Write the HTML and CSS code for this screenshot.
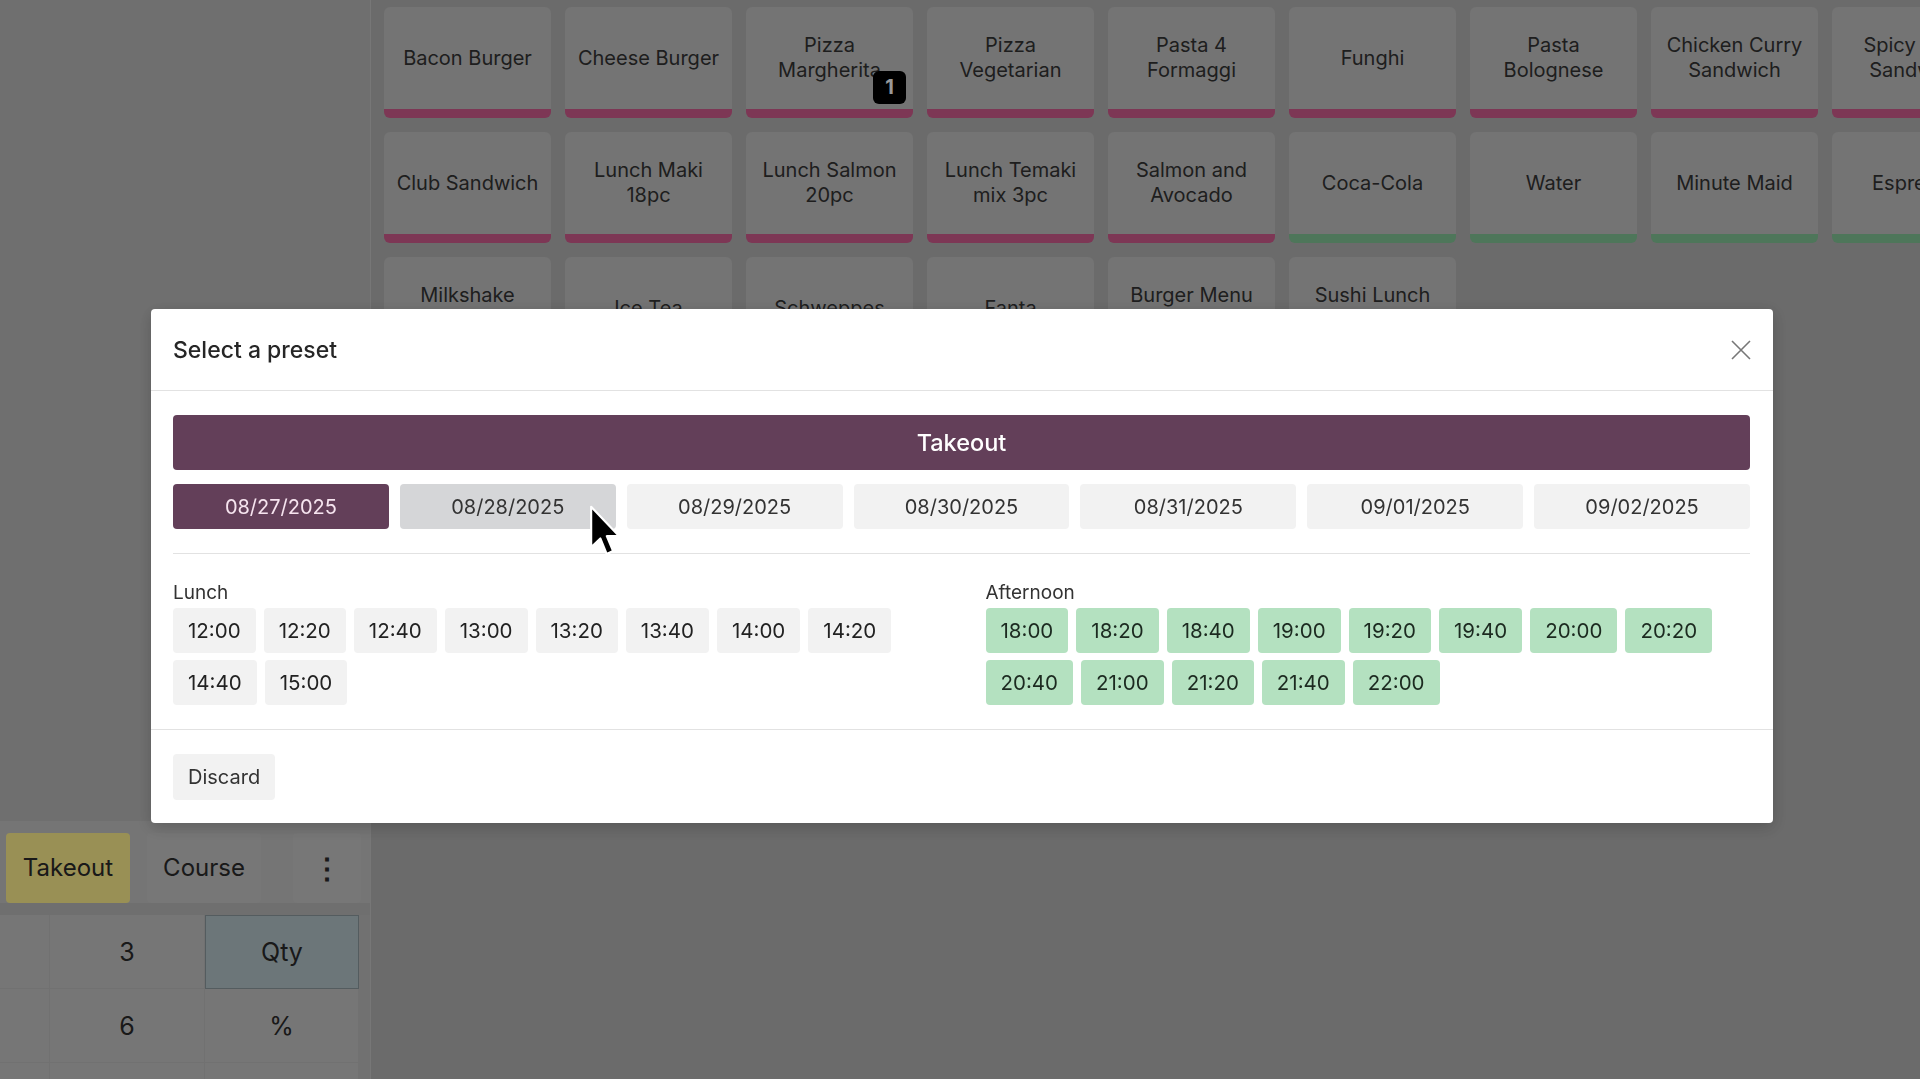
FILE: index.html
```html
<!DOCTYPE html>
<html lang="en">
<head>
    <meta charset="UTF-8">
    <meta name="viewport" content="width=device-width, initial-scale=1.0">
    <title>Point of Sale - Select a preset</title>
    <link rel="stylesheet" href="styles.css">
</head>
<body>
    <div class="pos">
        <aside class="left-panel">
            <div class="order-lines"></div>
            <div class="actions">
                <button class="action takeout">Takeout</button>
                <button class="action course">Course</button>
                <button class="action more">&#8942;</button>
            </div>
            <div class="numpad">
                <div class="key"></div>
                <div class="key">3</div>
                <div class="key mode">Qty</div>
                <div class="key"></div>
                <div class="key">6</div>
                <div class="key">%</div>
                <div class="key"></div>
                <div class="key"></div>
                <div class="key"></div>
            </div>
        </aside>

        <main class="products">
            <div class="product food"><span class="name">Bacon Burger</span></div>
            <div class="product food"><span class="name">Cheese Burger</span></div>
            <div class="product food"><span class="name">Pizza Margherita</span><span class="qty-badge">1</span></div>
            <div class="product food"><span class="name">Pizza Vegetarian</span></div>
            <div class="product food"><span class="name">Pasta 4 Formaggi</span></div>
            <div class="product food"><span class="name">Funghi</span></div>
            <div class="product food"><span class="name">Pasta Bolognese</span></div>
            <div class="product food"><span class="name">Chicken Curry Sandwich</span></div>
            <div class="product food"><span class="name">Spicy Tuna Sandwich</span></div>

            <div class="product food"><span class="name">Club Sandwich</span></div>
            <div class="product food"><span class="name">Lunch Maki 18pc</span></div>
            <div class="product food"><span class="name">Lunch Salmon 20pc</span></div>
            <div class="product food"><span class="name">Lunch Temaki mix 3pc</span></div>
            <div class="product food"><span class="name">Salmon and Avocado</span></div>
            <div class="product drink"><span class="name">Coca-Cola</span></div>
            <div class="product drink"><span class="name">Water</span></div>
            <div class="product drink"><span class="name">Minute Maid</span></div>
            <div class="product drink"><span class="name">Espresso</span></div>

            <div class="product drink"><span class="name">Milkshake Banana</span></div>
            <div class="product drink"><span class="name">Ice Tea</span></div>
            <div class="product drink"><span class="name">Schweppes</span></div>
            <div class="product drink"><span class="name">Fanta</span></div>
            <div class="product food"><span class="name">Burger Menu Combo</span></div>
            <div class="product food"><span class="name">Sushi Lunch Combo</span></div>
        </main>
    </div>

    <div class="backdrop">
        <div class="modal">
            <header class="modal-header">
                <h4 class="modal-title">Select a preset</h4>
                <button class="close" aria-label="Close">
                    <svg width="22" height="22" viewBox="0 0 22 22"><path d="M2 2 L20 20 M20 2 L2 20" stroke="#777" stroke-width="1.6" fill="none"/></svg>
                </button>
            </header>

            <div class="modal-body">
                <div class="preset-title">Takeout</div>

                <div class="dates">
                    <button class="date active">08/27/2025</button>
                    <button class="date hover">08/28/2025</button>
                    <button class="date">08/29/2025</button>
                    <button class="date">08/30/2025</button>
                    <button class="date">08/31/2025</button>
                    <button class="date">09/01/2025</button>
                    <button class="date">09/02/2025</button>
                </div>

                <div class="slots">
                    <div class="slot-group">
                        <div class="slot-label">Lunch</div>
                        <div class="slot-list">
                            <button class="slot">12:00</button>
                            <button class="slot">12:20</button>
                            <button class="slot">12:40</button>
                            <button class="slot">13:00</button>
                            <button class="slot">13:20</button>
                            <button class="slot">13:40</button>
                            <button class="slot">14:00</button>
                            <button class="slot">14:20</button>
                            <button class="slot">14:40</button>
                            <button class="slot">15:00</button>
                        </div>
                    </div>
                    <div class="slot-group">
                        <div class="slot-label">Afternoon</div>
                        <div class="slot-list">
                            <button class="slot free">18:00</button>
                            <button class="slot free">18:20</button>
                            <button class="slot free">18:40</button>
                            <button class="slot free">19:00</button>
                            <button class="slot free">19:20</button>
                            <button class="slot free">19:40</button>
                            <button class="slot free">20:00</button>
                            <button class="slot free">20:20</button>
                            <button class="slot free">20:40</button>
                            <button class="slot free">21:00</button>
                            <button class="slot free">21:20</button>
                            <button class="slot free">21:40</button>
                            <button class="slot free">22:00</button>
                        </div>
                    </div>
                </div>
            </div>

            <footer class="modal-footer">
                <button class="discard">Discard</button>
            </footer>
        </div>
    </div>

    <!-- mouse pointer in the capture -->
    <svg class="pointer" width="36" height="54" viewBox="0 0 20 30">
        <path d="M1.2 1 L1.2 23.5 L6.3 18.6 L9.8 27.2 L13.4 25.6 L9.9 17.3 L16.8 17.3 Z" fill="#000" stroke="#fff" stroke-width="1.2" stroke-linejoin="round"/>
    </svg>
</body>
</html>
```

FILE: styles.css
```css
* {
    box-sizing: border-box;
}
body {
    margin: 0;
    font-family: Inter, "Noto Sans", sans-serif;
    color: #222;
    overflow: hidden;
}
button {
    font-family: inherit;
    border: none;
    cursor: pointer;
}

/* page behind the dialog */
.pos {
    display: flex;
    height: 1079px;
    background-color: #b2b2b2;
}
.left-panel {
    width: 371px;
    flex-shrink: 0;
    display: flex;
    flex-direction: column;
    background-color: #bababa;
    border-right: 1px solid #c6c6c6;
}
.order-lines {
    flex: 1;
}
.actions {
    display: flex;
    align-items: flex-end;
    gap: 17px;
    height: 82px;
    flex-shrink: 0;
    padding: 0 9px 0 6px;
    background-color: #c3c3c3;
}
.action {
    display: flex;
    align-items: center;
    justify-content: center;
    height: 70px;
    padding: 0;
    border-radius: 4px;
    font-size: 24px;
    line-height: 30px;
    white-space: nowrap;
    color: #2a2a2a;
    background-color: #c6c6c6;
}
.takeout {
    width: 124px;
    background-color: #fff08e;
}
.course {
    width: 114px;
}
.more {
    width: 68px;
    margin-left: auto;
    font-size: 28px;
    font-weight: bold;
}
.numpad {
    display: grid;
    grid-template-columns: 50px 155px 154px;
    grid-auto-rows: 74px;
    margin-top: 12px;
    height: 164px;
    flex-shrink: 0;
    overflow: hidden;
    background-color: #bcbcbc;
}
.key {
    display: flex;
    align-items: center;
    justify-content: center;
    font-size: 25px;
    color: #2a2a2a;
    background-color: #c5c5c5;
    border-right: 1px solid #bdbdbd;
    border-bottom: 1px solid #bdbdbd;
}
.key.mode {
    background-color: #b4c5ca;
    border: 1px solid #8d999e;
}

.products {
    flex: 1;
    display: grid;
    grid-template-columns: repeat(9, 167px);
    grid-auto-rows: 111px;
    gap: 14px;
    padding: 7px 0 0 13px;
    overflow: hidden;
}
.product {
    position: relative;
    display: flex;
    align-items: center;
    justify-content: center;
    padding: 0 10px;
    border-radius: 6px;
    background-color: #c1c1c1;
    border-bottom: 9px solid #d05c8e;
    text-align: center;
    font-size: 20px;
    line-height: 25px;
    color: #333;
}
.product.drink {
    border-bottom-color: #82c596;
}
.qty-badge {
    position: absolute;
    right: 7px;
    bottom: 5px;
    width: 33px;
    height: 33px;
    line-height: 33px;
    border-radius: 6px;
    background-color: #000;
    color: #fff;
    font-size: 20px;
    font-weight: bold;
}

/* dialog */
.backdrop {
    position: fixed;
    inset: 0;
    display: flex;
    justify-content: center;
    align-items: flex-start;
    padding: 309px 0 0 4px;
    background-color: rgba(0, 0, 0, 0.4);
}
.modal {
    width: 1622px;
    background-color: #fff;
    border-radius: 4px;
    box-shadow: 0 4px 16px rgba(0, 0, 0, 0.2);
}
.modal-header {
    display: flex;
    align-items: center;
    justify-content: space-between;
    height: 82px;
    padding: 0 21px 0 22px;
    border-bottom: 1px solid #e2e2e2;
}
.modal-title {
    margin: 0;
    font-size: 23px;
    font-weight: 500;
    color: #262626;
}
.close {
    display: flex;
    padding: 0;
    background: none;
}
.modal-body {
    padding: 24px 23px 24px 22px;
}
.preset-title {
    height: 55px;
    line-height: 55px;
    border-radius: 4px;
    background-color: #633f59;
    color: #fff;
    text-align: center;
    font-size: 23.5px;
    font-weight: 500;
}
.dates {
    display: grid;
    grid-template-columns: repeat(7, 1fr);
    gap: 11px;
    margin-top: 14px;
    padding-bottom: 24px;
    border-bottom: 1px solid #e2e2e2;
}
.date {
    height: 45px;
    border-radius: 4px;
    background-color: #f2f2f2;
    color: #333;
    font-size: 20px;
}
.date.active {
    background-color: #633f59;
    color: #f6e4ef;
}
.date.hover {
    background-color: #d5d6d8;
}
.slots {
    display: grid;
    grid-template-columns: 1fr 1fr;
    gap: 48px;
    padding-top: 28px;
}
.slot-label {
    height: 22px;
    margin-bottom: 4px;
    font-size: 19px;
    line-height: 22px;
    color: #333;
}
.slot-list {
    display: flex;
    flex-wrap: wrap;
    gap: 7px 8px;
}
.slot {
    height: 45px;
    padding: 0 15px;
    border-radius: 4px;
    background-color: #f2f2f2;
    color: #222;
    font-size: 20.5px;
}
.slot.free {
    background-color: #b4e1c0;
    color: #1c2a20;
}
.modal-footer {
    padding: 24px 22px 23px;
    border-top: 1px solid #e2e2e2;
}
.discard {
    height: 46px;
    padding: 0 15px;
    border-radius: 4px;
    background-color: #f2f2f2;
    color: #333;
    font-size: 20px;
}

.pointer {
    position: fixed;
    left: 589px;
    top: 505px;
}
```
